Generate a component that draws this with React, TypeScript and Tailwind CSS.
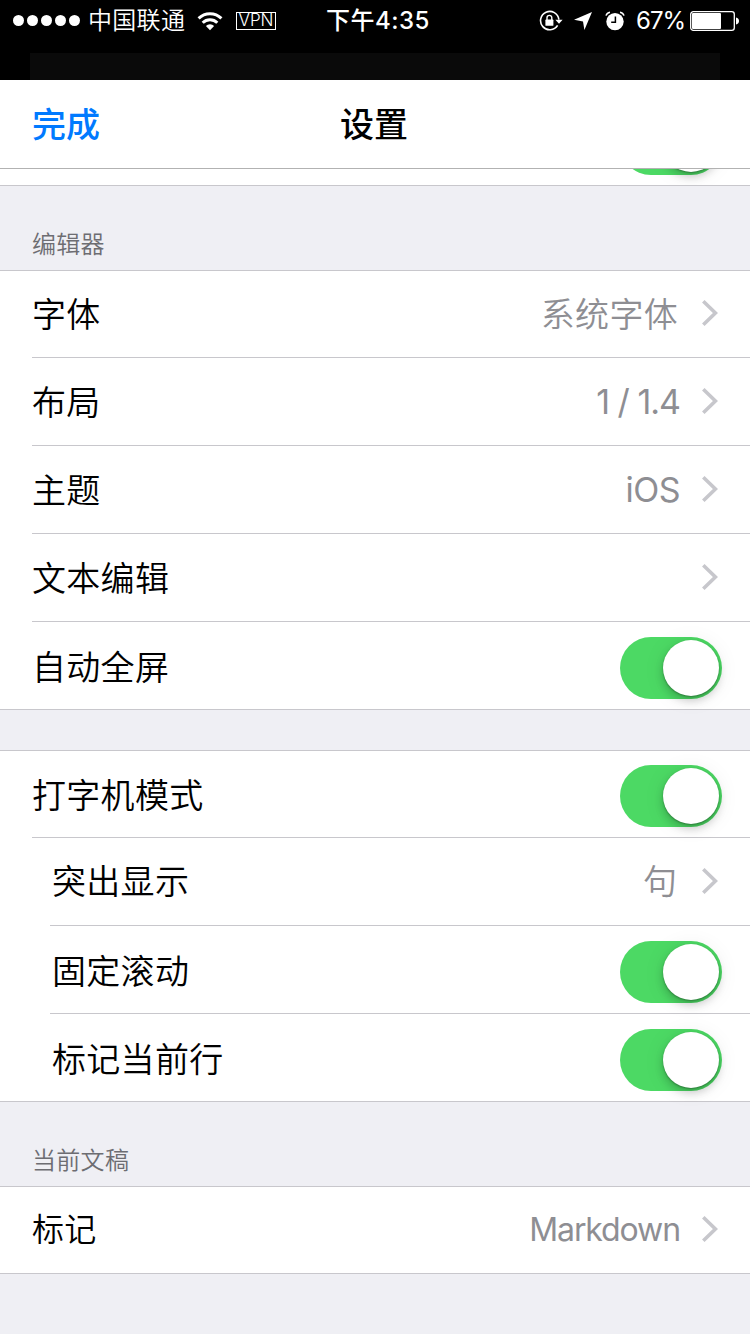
import type { ReactNode } from "react";
import clsx from "clsx";

type RowData = {
  label: string;
  value?: string;
  valueClass?: string;
  toggle?: boolean;
  indent?: boolean;
  labelClass?: string;
};

const editorRows: RowData[] = [
  {
    label: "字体",
    value: "系统字体",
    valueClass: "text-[34px] tracking-[0.3px] mr-[2px]",
    labelClass: "text-[34px]",
  },
  {
    label: "布局",
    value: "1 / 1.4",
    valueClass: "text-[34px] font-normal tracking-[-1px]",
    labelClass: "text-[34px] pt-[2px]",
  },
  {
    label: "主题",
    value: "iOS",
    valueClass: "text-[34px] font-normal tracking-[-0.5px]",
    labelClass: "text-[34px] pt-[2px]",
  },
  { label: "文本编辑", labelClass: "text-[34px] pt-[2px]" },
  { label: "自动全屏", toggle: true, labelClass: "text-[34px] pt-[3px]" },
];

const typewriterRows: RowData[] = [
  { label: "打字机模式", toggle: true, labelClass: "text-[34px] pt-[2px]" },
  {
    label: "突出显示",
    value: "句",
    valueClass: "text-[34px] mr-[3px]",
    indent: true,
    labelClass: "text-[34px]",
  },
  { label: "固定滚动", toggle: true, indent: true, labelClass: "text-[34px] pt-[3px]" },
  { label: "标记当前行", toggle: true, indent: true, labelClass: "text-[34px] pt-[3px]" },
];

const documentRows: RowData[] = [
  {
    label: "标记",
    value: "Markdown",
    valueClass: "text-[32px] font-normal tracking-[-1.1px]",
    labelClass: "text-[32px]",
  },
];

function Toggle() {
  return (
    <div className="flex h-[62px] w-[102px] shrink-0 justify-end rounded-full bg-[#4cd964] p-[3px]">
      <div className="size-14 rounded-full bg-white shadow-[0_1px_2px_rgba(0,0,0,0.3),0_5px_8px_rgba(0,0,0,0.18),0_2px_22px_rgba(0,0,0,0.08)]" />
    </div>
  );
}

function Chevron() {
  return (
    <svg width="18" height="28" viewBox="0 0 18 28" fill="none" className="mb-[2px] shrink-0">
      <path d="M3.3 2.2 15.4 14 3.3 25.8" stroke="#c7c7cc" strokeWidth="3.6" />
    </svg>
  );
}

function Row({ row, last }: { row: RowData; last: boolean }) {
  return (
    <div
      className={clsx(
        "flex h-[88px] border-[#c8c7cc] first:h-[87px]",
        row.indent ? "pl-[50px]" : "pl-8",
        last && "border-b"
      )}
    >
      <div className={clsx("flex flex-1 justify-between border-[#c8c7cc]", !last && "border-b")}>
        <span
          className={clsx("self-center tracking-[0.3px]", row.indent && "pl-0.5", row.labelClass)}
        >
          {row.label}
        </span>
        {row.toggle ? (
          <div className="flex items-end pr-7 pb-[10px]">
            <Toggle />
          </div>
        ) : (
          <div className="flex items-center gap-5 pr-8 text-[#8e8e93]">
            <span className={row.valueClass}>{row.value}</span>
            <Chevron />
          </div>
        )}
      </div>
    </div>
  );
}

function Group({ rows }: { rows: RowData[] }) {
  return (
    <section className="shrink-0 border-t border-[#c8c7cc] bg-white">
      {rows.map((row, i) => (
        <Row key={row.label} row={row} last={i === rows.length - 1} />
      ))}
    </section>
  );
}

function SectionTitle({ children }: { children: ReactNode }) {
  return (
    <h2 className="flex h-[84px] shrink-0 items-end pb-[7px] pl-8 text-2xl leading-9 tracking-[0.3px] text-[#6d6d72]">
      {children}
    </h2>
  );
}

function WifiIcon() {
  return (
    <svg width="26" height="20" viewBox="0 0 26 20" fill="none" stroke="#fff" strokeWidth="3">
      <path d="M1.6 7.4a16.2 16.2 0 0 1 22.8 0" />
      <path d="M5.7 11.7a10.4 10.4 0 0 1 14.6 0" />
      <path d="M13 19.2 8.9 15a5.8 5.8 0 0 1 8.2 0z" fill="#fff" stroke="none" />
    </svg>
  );
}

function RotationLockIcon() {
  return (
    <svg width="24" height="22" viewBox="0 0 24 22" fill="none">
      <path d="M18.6 15.4A9.2 9.2 0 1 1 19.9 9.6" stroke="#fff" strokeWidth="1.6" />
      <path d="M16.4 9.8h7.2l-3.6 4z" fill="#fff" />
      <rect x="6.4" y="9.6" width="8" height="6.2" rx="0.6" fill="#fff" />
      <path d="M8 10V7.8a2.4 2.4 0 0 1 4.8 0V10" stroke="#fff" strokeWidth="1.4" />
    </svg>
  );
}

function AlarmIcon() {
  return (
    <svg width="20" height="20" viewBox="0 0 20 20" fill="none">
      <circle cx="10" cy="10.6" r="8.7" fill="#fff" />
      <path d="M1 4.6A4.8 4.8 0 0 1 5 1.2M19 4.6a4.8 4.8 0 0 0-4-3.4" stroke="#fff" strokeWidth="1.5" />
      <path d="M10.4 5.4v5.8H6.2" stroke="#000" strokeWidth="1.5" />
    </svg>
  );
}

function StatusBar() {
  return (
    <div className="flex h-[41px] items-center text-2xl leading-10 text-white">
      <div className="flex gap-[3px] pl-[13px]">
        {[0, 1, 2, 3, 4].map((dot) => (
          <div key={dot} className="size-[11px] rounded-full bg-white" />
        ))}
      </div>
      <span className="ml-2 w-[109px] pt-px font-[350] tracking-[0.3px] whitespace-nowrap">中国联通</span>
      <WifiIcon />
      <span className="ml-[13px] flex h-[18px] w-10 items-center justify-center border border-white text-[17px] leading-none">
        VPN
      </span>
      <span className="ml-[50px] w-[213px] pt-px font-medium tracking-[0.5px] whitespace-nowrap">下午4:35</span>
      <RotationLockIcon />
      <svg width="18" height="18" viewBox="0 0 18 18" className="ml-[11px]">
        <path d="M18 0 10.4 18 9 9.4 0 7.8z" fill="#fff" />
      </svg>
      <div className="ml-[13px]">
        <AlarmIcon />
      </div>
      <span className="ml-[11px] w-[54px] pt-px font-normal tracking-[-1px] whitespace-nowrap">67%</span>
      <svg width="50" height="20" viewBox="0 0 50 20" fill="none">
        <rect x="0.7" y="0.7" width="43.6" height="18.6" rx="2.6" stroke="#fff" strokeWidth="1.3" />
        <rect x="2" y="2" width="29" height="16" rx="1" fill="#fff" />
        <path d="M46 6.5c2 .6 3 1.8 3 3.5s-1 2.9-3 3.5z" fill="#fff" />
      </svg>
    </div>
  );
}

export default function App() {
  return (
    <div className="flex h-[1334px] w-[750px] flex-col overflow-hidden bg-[#efeff4] font-['Inter','Noto_Sans_CJK_SC',sans-serif] font-[350] text-black">
      <header className="flex h-20 shrink-0 flex-col justify-between bg-black">
        <StatusBar />
        {/* edge of the screen behind the sheet */}
        <div className="mx-[30px] h-[27px] bg-[#0a0a0a]" />
      </header>

      <nav className="grid h-[89px] shrink-0 grid-cols-3 items-center border-b border-[#b2b2b2] bg-white px-8 text-[34px] font-medium">
        <button className="text-left text-[#007aff]">完成</button>
        <h1 className="pr-[2px] text-center">设置</h1>
      </nav>

      {/* tail of the row scrolled under the nav bar */}
      <div className="flex h-[17px] shrink-0 items-end justify-end overflow-hidden border-b border-[#c8c7cc] bg-white pr-7 pb-[10px]">
        <Toggle />
      </div>

      <SectionTitle>编辑器</SectionTitle>
      <Group rows={editorRows} />
      <div className="h-10 shrink-0" />
      <Group rows={typewriterRows} />
      <SectionTitle>当前文稿</SectionTitle>
      <Group rows={documentRows} />
    </div>
  );
}
